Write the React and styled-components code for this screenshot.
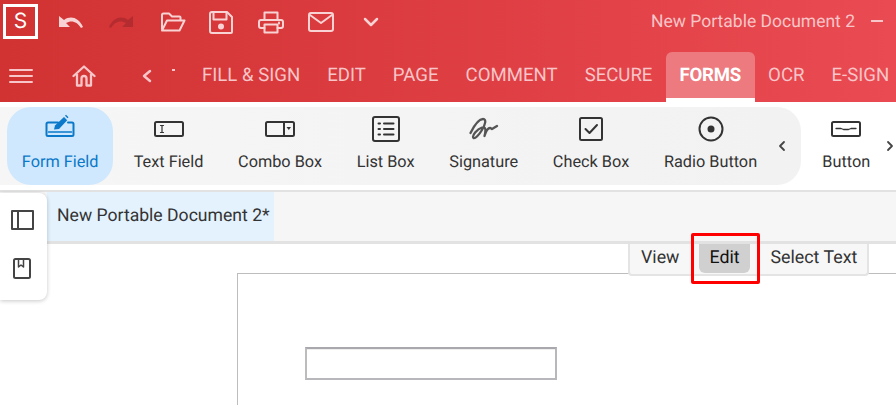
import React from "react";
import styled, { createGlobalStyle } from "styled-components";

const Global = createGlobalStyle`
  html, body { margin: 0; padding: 0; background: #fff; overflow: hidden; }
  body { font-family: Roboto, "Liberation Sans", sans-serif; text-rendering: geometricPrecision; }
  * { box-sizing: border-box; }
`;
const Shell = styled.div`width: 896px; height: 405px; overflow: hidden; display: flex; flex-direction: column;`;
const Header = styled.header`height: 102px; flex: none; background: linear-gradient(90deg, #d13232 0%, #ea4a52 100%); display: flex; flex-direction: column;`;
const TitleBar = styled.div`height: 52px; display: flex; align-items: flex-start; position: relative;`;
const Logo = styled.div`width: 35px; height: 35px; margin: 4px 0 0 3px; border: 3px solid #fff; color: #fff; font: 400 21px Inter, sans-serif; display: flex; align-items: center; justify-content: center;`;
const QuickIcons = styled.div`display: flex; margin-left: 20px; height: 44px; align-items: center; color: #f9d3d4;`;
const IconSlot = styled.span`display: flex; width: ${p => p.$w}px; color: ${p => p.$dim ? "#b52c30" : "inherit"};`;
const DocTitle = styled.div`margin-left: auto; margin-right: 41px; margin-top: 11.5px; font-size: 17.5px; line-height: 21px; color: #f8c5c8; white-space: nowrap;`;
const Minimize = styled.span`position: absolute; right: 13px; top: 20px; width: 12px; height: 1.5px; background: #f8c5c8;`;
const NavBar = styled.nav`height: 50px; display: flex; align-items: stretch; color: #f8c5c8;`;
const NavIcons = styled.div`display: flex; align-items: center; width: 188.5px; padding-left: 9px; padding-bottom: 3px; flex: none;`;
const Dot = styled.span`width: 3px; height: 2px; background: #f8c5c8; margin: -12px 0 0 20px;`;
const NavTab = styled.div`
  position: relative; padding: 0 13.5px 4px; display: flex; align-items: center; font-size: 18.6px; white-space: nowrap; flex: none;
  ${p => p.$active && `
    background: #ed7a7e; color: #fff; font-weight: 700; border-radius: 6px 6px 0 0;
    border-bottom: 4px solid #fff; padding-bottom: 0; letter-spacing: -0.2px;
  `}
`;
const Ribbon = styled.div`height: 78px; margin-top: 5px; flex: none; display: flex;`;
const Panel = styled.div`width: 801px; flex: none; display: flex; background: linear-gradient(90deg, #f6f6f6, #f2f2f2); border-radius: 0 24px 24px 0; padding-left: 7px;`;
const Tool = styled.div`
  flex: none; display: flex; flex-direction: column; align-items: center; padding: 0 17.35px;
  font-size: 16.3px; color: ${p => p.$active ? "#0b78c9" : "#333"};
  margin-left: ${p => p.$ml || 0}px;
  ${p => p.$active && `background: #cfe8fd; border-radius: 24px; padding: 0 14.8px; margin-right: 3px;`}
`;
const ToolIcon = styled.div`height: 32px; margin: 6px 0 7px; display: flex; align-items: center; justify-content: center; color: ${p => p.$soft ? "#555" : "inherit"};`;
const ToolLabel = styled.div`line-height: 20px; white-space: nowrap;`;
const Chevron = styled.div`display: flex; align-items: center; color: #444; margin-left: ${p => p.$ml}px;`;
const TabStrip = styled.div`
  height: 54px; margin-top: 5px; flex: none; background: #f6f6f6; border-top: 2px solid #e2e2e2; border-bottom: 3px solid #e2e2e2;
  padding-left: 47px; display: flex;
`;
const DocTab = styled.div`width: 227px; background: #e3f2fd; padding-left: 10px; font-size: 17.6px; color: #333; display: flex; align-items: center; white-space: nowrap; padding-bottom: 1px;`;
const Workspace = styled.main`flex: 1; position: relative; padding: 29px 0 0 237px;`;
const Sheet = styled.div`height: 200px; border-top: 1px solid #bdbdbd; border-left: 1px solid #bdbdbd; padding: 73px 0 0 67px;`;
const FormBox = styled.div`width: 252px; height: 33px; border: 2px solid #b8b8bc; border-top-color: #a9a9ad; border-left-color: #bcbcbc; background: #fff; box-shadow: inset 0 1px 0 #eee;`;
const SideRail = styled.aside`
  position: absolute; left: 0; top: 193px; width: 47px; height: 107px; background: #fff; border-radius: 0 8px 8px 0;
  box-shadow: 0 1px 4px rgba(0,0,0,.22); display: flex; flex-direction: column; align-items: center; gap: 28px; padding: 17px 3px 0 0; color: #444;
`;
const ModeBar = styled.div`
  position: absolute; left: 628px; top: 0; width: 241px; height: 32px; background: #f7f7f7;
  border: 2px solid #e4e4e4; border-top: 0; border-radius: 0 0 4px 4px; display: flex; padding-left: 11px; font-size: 17.8px; color: #333;
`;
const ModeBtn = styled.div`
  display: flex; align-items: center; height: 29px; padding-bottom: 2px; white-space: nowrap; padding-left: ${p => p.$active ? 10 : 0}px; padding-right: ${p => p.$active ? 10 : 0}px;
  margin-right: ${p => p.$mr}px; color: ${p => p.$active ? "#111" : "#333"};
  ${p => p.$active && `background: #d0d0d0; border-radius: 0 0 6px 6px;`}
`;
const Callout = styled.div`position: absolute; left: 691px; top: -11px; width: 69px; height: 51px; border: 3px solid #f00; border-radius: 2px;`;

const S = ({ w, h, children, vb, sw = 2 }) => (
  <svg width={w} height={h} viewBox={vb || `0 0 ${w} ${h}`} fill="none" stroke="currentColor" strokeWidth={sw} strokeLinecap="round" strokeLinejoin="round">{children}</svg>
);

const Undo = () => <S w={26} h={14}><path d="M1 1v11h11l-4-4c5-3 11-2 15 5l2-1C21 3 13 0 6 5z" fill="currentColor" stroke="none" /></S>;
const Redo = () => <S w={26} h={14}><g transform="matrix(-1 0 0 1 26 0)"><path d="M1 1v11h11l-4-4c5-3 11-2 15 5l2-1C21 3 13 0 6 5z" fill="currentColor" stroke="none" /></g></S>;
const Folder = () => <S w={26} h={20}><path d="M2 17V3a1.500 1.500 0 0 1 1.500-1.500h5.500l3 3h7.500a1 1 0 0 1 1 1V8M2 18.500h17.500L24.500 8.500H7L2 18.500z" /></S>;
const Save = () => <S w={24} h={23}><path d="M3 1h15l5 5v15a1 1 0 0 1-1 1H3a2 2 0 0 1-2-2V3a2 2 0 0 1 2-2z" /><path d="M4.500 2v6.500h13V2" /><circle cx="12" cy="15.500" r="3" fill="currentColor" stroke="none" /></S>;
const Print = () => <S w={26} h={23}><path d="M6.500 9V1.500h13V9M6.500 17H3a2 2 0 0 1-2-2v-4a2 2 0 0 1 2-2h20a2 2 0 0 1 2 2v4a2 2 0 0 1-2 2h-3.500" /><path d="M6.500 13.500h13v8h-13z" /><path d="M21 11.500v1" /></S>;
const Mail = () => <S w={26} h={20}><rect x="1" y="1" width="24" height="18" rx="2" /><path d="M2 3l11 8 11-8" /></S>;
const Down = () => <S w={16} h={10} sw={2.500}><path d="M2 2l6 6 6-6" /></S>;
const Burger = () => <S w={24} h={16} sw={2}><path d="M1 2h22M1 8h22M1 14h22" /></S>;
const Home = () => <S w={24} h={22} sw={2.300}><path d="M1.500 11L12 1.500 22.500 11M5 9v11.500h4.500v-7a2.500 2.500 0 0 1 5 0v7H19V9" /></S>;
const Left = ({ s = 10, h = 14, sw = 2.500 }) => <S w={s} h={h} sw={sw}><path d={`M${s - 2} 2L2 ${h / 2}l${s - 4} ${h / 2 - 2}`} /></S>;
const Right = () => <S w={8} h={12} sw={1.800}><path d="M2 2l4 4-4 4" /></S>;

const FormFieldIcon = () => <S w={30} h={32}><path d="M13 9.500H3A1.500 1.500 0 0 0 1.500 11v10.500A1.500 1.500 0 0 0 3 23h24a1.500 1.500 0 0 0 1.500-1.500V11A1.500 1.500 0 0 0 27 9.500h-4" /><path d="M3.500 19h23" strokeWidth="1.500" /><path d="M9 16.500l1-4L19 4l3.200 3.200L14 16z" fill="currentColor" stroke="none" /><path d="M20 2.800l1-1 2.500 2.500-1 1z" fill="currentColor" stroke="none" /></S>;
const TextFieldIcon = () => <S w={30} h={16}><rect x="1" y="1" width="28" height="14" rx="1.500" /><path d="M6.500 4.500h3M8 4.500v7M6.500 11.500h3" strokeWidth="1.200" /></S>;
const ComboIcon = () => <S w={30} h={16}><rect x="1" y="1" width="28" height="14" rx="1.500" /><path d="M19 1v14" /><path d="M21.500 6h4.500l-2.200 3z" fill="currentColor" stroke="none" /></S>;
const ListIcon = () => <S w={28} h={26}><rect x="1" y="1" width="26" height="24" rx="2" /><path d="M6.500 7.500h1.500M6.500 13h1.500M6.500 18.500h1.500M12 7.500h9.500M12 13h9.500M12 18.500h9.500" /></S>;
const SignIcon = () => <S w={30} h={26} sw={2.300}><path d="M1.500 17C5 10 10 3 14 3C18 3 16 9 13 14C10 19 6 23 4.500 22C2.500 20 8 13 13 11.500C17 10.500 17 14 15.500 20C17 15 19 12 21 12C22.500 12 22 13 23 13L28 10" /></S>;
const CheckIcon = () => <S w={24} h={24}><rect x="1" y="1" width="22" height="22" rx="1.500" /><path d="M6.500 12l4 4 7.500-8" /></S>;
const RadioIcon = () => <S w={26} h={26}><circle cx="13" cy="13" r="11.500" /><circle cx="13" cy="13" r="3.500" fill="currentColor" stroke="none" /></S>;
const ButtonIcon = () => <S w={30} h={16}><rect x="1" y="1" width="28" height="14" rx="1.500" /><path d="M5 7.500h5l2.500 1h5l2.500-1h5" strokeWidth="1.300" /></S>;
const SidebarIcon = () => <S w={23} h={20}><rect x="1" y="1" width="21" height="18" /><path d="M7 1v18" /></S>;
const BookIcon = () => <S w={18} h={21}><rect x="1" y="1" width="16" height="19" rx="1.500" /><path d="M5.500 1v8l2.500-2 2.500 2V1" strokeWidth="1.500" /></S>;

const tools = [
  ["Form Field", <FormFieldIcon />, true], ["Text Field", <TextFieldIcon />], ["Combo Box", <ComboIcon />],
  ["List Box", <ListIcon />], ["Signature", <SignIcon />, false, true], ["Check Box", <CheckIcon />], ["Radio Button", <RadioIcon />],
];
const tabs = ["FILL & SIGN", "EDIT", "PAGE", "COMMENT", "SECURE", "FORMS", "OCR", "E-SIGN"];

export default function App() {
  return (
    <Shell>
      <Global />
      <Header>
        <TitleBar>
          <Logo>S</Logo>
          <QuickIcons>
            <IconSlot $w={50}><Undo /></IconSlot>
            <IconSlot $w={52} $dim><Redo /></IconSlot>
            <IconSlot $w={49}><Folder /></IconSlot>
            <IconSlot $w={49}><Save /></IconSlot>
            <IconSlot $w={50}><Print /></IconSlot>
            <IconSlot $w={55}><Mail /></IconSlot>
            <IconSlot $w={16}><Down /></IconSlot>
          </QuickIcons>
          <DocTitle>New Portable Document 2</DocTitle>
          <Minimize />
        </TitleBar>
        <NavBar>
          <NavIcons>
            <IconSlot $w={63}><Burger /></IconSlot>
            <IconSlot $w={70}><Home /></IconSlot>
            <IconSlot $w={10}><Left /></IconSlot>
            <Dot />
          </NavIcons>
          {tabs.map(t => <NavTab key={t} $active={t === "FORMS"}>{t}</NavTab>)}
        </NavBar>
      </Header>
      <Ribbon>
        <Panel>
          {tools.map(([l, ic, a, soft]) => (
            <Tool key={l} $active={a}><ToolIcon $soft={soft}>{ic}</ToolIcon><ToolLabel>{l}</ToolLabel></Tool>
          ))}
          <Chevron $ml={3}><Left s={8} h={12} sw={1.800} /></Chevron>
        </Panel>
        <Tool $ml={4}><ToolIcon><ButtonIcon /></ToolIcon><ToolLabel>Button</ToolLabel></Tool>
        <Chevron $ml={-2}><Right /></Chevron>
      </Ribbon>
      <TabStrip><DocTab>New Portable Document 2*</DocTab></TabStrip>
      <Workspace>
        <Sheet><FormBox /></Sheet>
        <ModeBar>
          <ModeBtn $mr={20}>View</ModeBtn>
          <ModeBtn $active $mr={21}>Edit</ModeBtn>
          <ModeBtn>Select Text</ModeBtn>
        </ModeBar>
        <Callout />
      </Workspace>
      <SideRail><SidebarIcon /><BookIcon /></SideRail>
    </Shell>
  );
}
